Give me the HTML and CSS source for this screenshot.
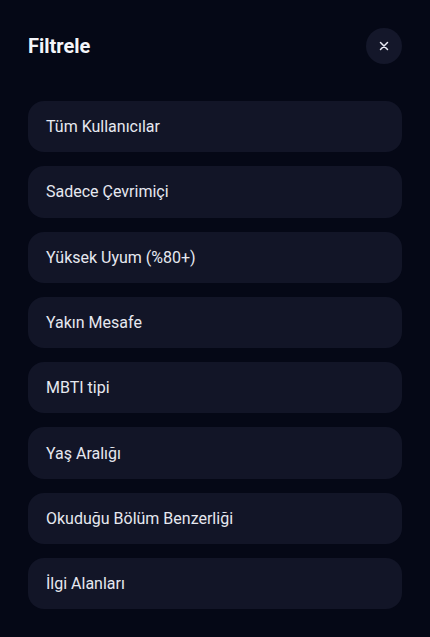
FILE: index.html
```html
<!DOCTYPE html>
<html lang="tr">
  <head>
    <meta charset="UTF-8" />
    <meta name="viewport" content="width=device-width, initial-scale=1.0" />
    <title>Filtrele</title>
    <link rel="stylesheet" href="styles.css">
  </head>
  <body>
    <div class="sheet">
      <div class="sheet_head">
        <h2>Filtrele</h2>
        <button class="close" aria-label="Kapat">
          <svg width="10" height="10" viewBox="0 0 10 10">
            <path d="M1.5 1.5L8.5 8.5M8.5 1.5L1.5 8.5" stroke="#e8eaf4" stroke-width="1.5" stroke-linecap="round" />
          </svg>
        </button>
      </div>
      <ul class="options">
        <li>Tüm Kullanıcılar</li>
        <li>Sadece Çevrimiçi</li>
        <li>Yüksek Uyum (%80+)</li>
        <li>Yakın Mesafe</li>
        <li>MBTI tipi</li>
        <li>Yaş Aralığı</li>
        <li>Okuduğu Bölüm Benzerliği</li>
        <li>İlgi Alanları</li>
      </ul>
    </div>
  </body>
</html>
```

FILE: styles.css
```css
* {
  padding: 0;
  margin: 0;
  box-sizing: border-box;
}
body {
  background-color: #050816;
  font-family: Roboto, "Noto Sans", sans-serif;
  color: #e6e8f0;
}
.sheet {
  padding: 28px 28px;
}
.sheet_head {
  display: flex;
  justify-content: space-between;
  align-items: center;
  height: 36px;
  margin-bottom: 37px;
}
.sheet_head h2 {
  font-size: 20px;
  font-weight: 700;
  color: #f4f5fa;
}
.close {
  width: 36px;
  height: 36px;
  border-radius: 50%;
  border: none;
  background-color: #14172a;
  display: flex;
  justify-content: center;
  align-items: center;
}
.options {
  list-style: none;
  display: flex;
  flex-direction: column;
  gap: 14px;
}
.options li {
  height: 51.3px;
  padding: 0 18px;
  border-radius: 16px;
  background-color: #121527;
  display: flex;
  align-items: center;
  font-size: 16px;
}
```
